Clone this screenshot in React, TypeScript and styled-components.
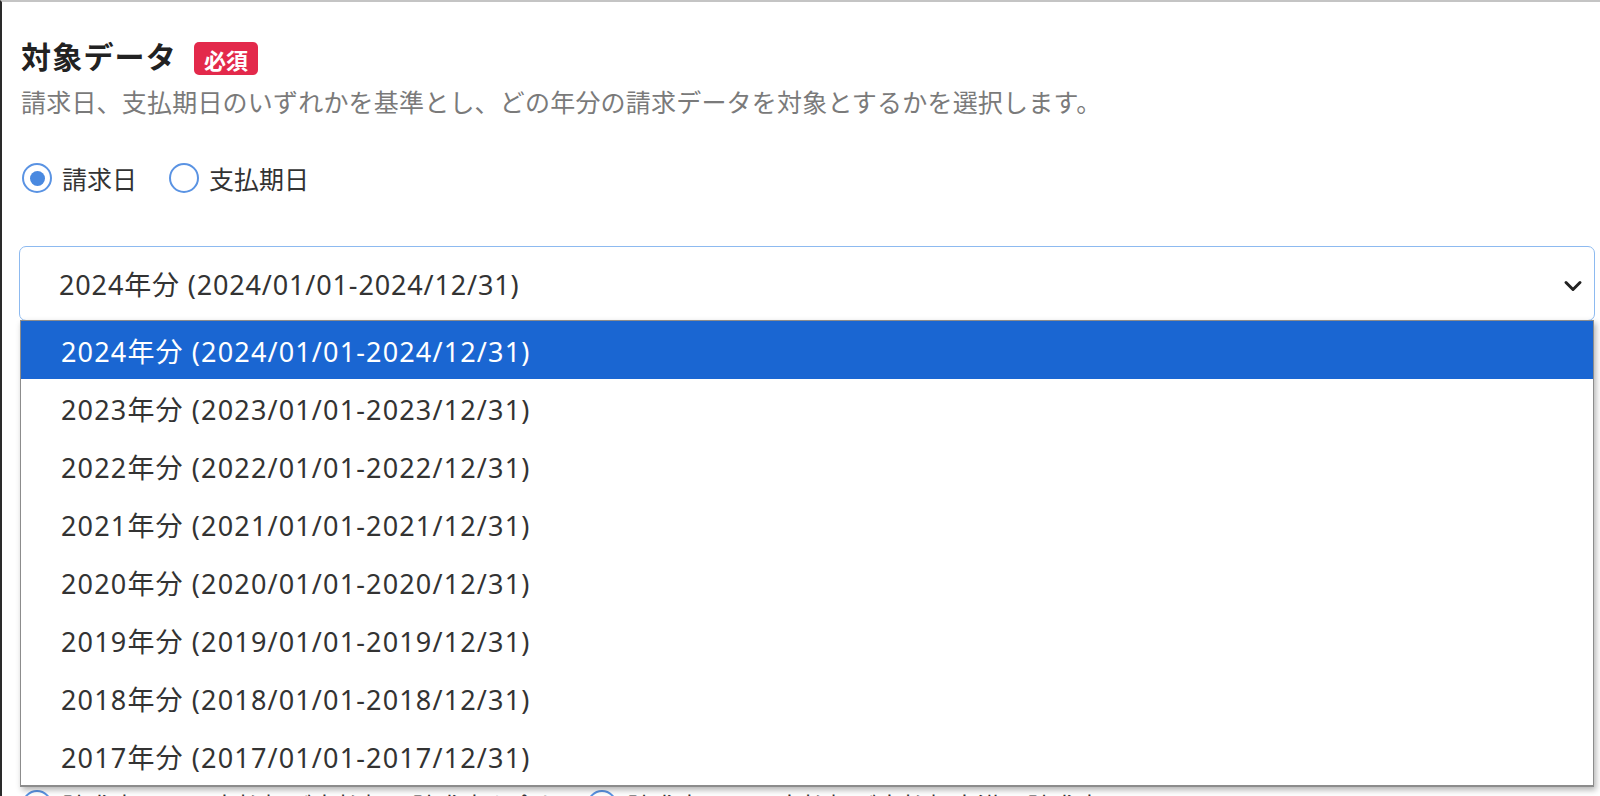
import React from "react";
import styled, { createGlobalStyle } from "styled-components";

const Global = createGlobalStyle`
  html, body { margin: 0; padding: 0; background: #fff; }
  body { font-family: "Noto Sans", "Noto Sans CJK JP", sans-serif; color: #333; overflow: hidden; }
`;

const Frame = styled.div`
  width: 1600px;
  height: 796px;
  box-sizing: border-box;
  border-left: 2px solid #2a2a2a;
  border-top: 2px solid #c4c4c4;
  padding: 31px 5px 0 17px;
  overflow: hidden;
`;

const TitleRow = styled.div`
  display: flex;
  align-items: center;
  gap: 17px;
  height: 44px;
  padding-left: 2px;
`;

const Title = styled.h2`
  margin: 0;
  font-size: 30px;
  line-height: 44px;
  font-weight: 700;
  color: #222;
  font-family: "Noto Sans CJK JP", sans-serif;
  letter-spacing: 1.2px;
`;

const Badge = styled.span`
  display: inline-flex;
  align-items: center;
  justify-content: center;
  width: 64px;
  height: 33px;
  margin-top: 7px;
  border-radius: 5px;
  background: #e3294b;
  color: #fff;
  font-size: 22px;
  font-weight: 700;
  font-family: "Noto Sans CJK JP", sans-serif;
`;

const Desc = styled.p`
  margin: 7px 0 0;
  padding-left: 2px;
  font-size: 25px;
  line-height: 34px;
  color: #7a7a7a;
  letter-spacing: 0.2px;
  font-family: "Noto Sans CJK JP", sans-serif;
`;

const RadioGroup = styled.div<{ $top: number; $gap: number }>`
  display: flex;
  align-items: center;
  gap: ${(p) => p.$gap}px;
  height: 30px;
  margin-top: ${(p) => p.$top}px;
`;

const RadioLabel = styled.label`
  display: flex;
  align-items: center;
  gap: 10px;
  font-size: 25px;
  color: #333;
  font-family: "Noto Sans CJK JP", sans-serif;
  white-space: nowrap;
`;

const RadioCircle = styled.span<{ $checked?: boolean }>`
  box-sizing: border-box;
  width: 30px;
  height: 30px;
  border-radius: 50%;
  border: 2.5px solid #5a93e3;
  background: #fff;
  display: inline-flex;
  align-items: center;
  justify-content: center;
  margin-left: 3px;
  &::after {
    content: "";
    width: 15px;
    height: 15px;
    border-radius: 50%;
    background: ${(p) => (p.$checked ? "#4a89e0" : "transparent")};
  }
`;

const SelectWrap = styled.div`
  position: relative;
  margin-top: 53px;
`;

const SelectBox = styled.div`
  box-sizing: border-box;
  height: 75px;
  border: 1.5px solid #8dbaf0;
  border-radius: 7px;
  background: #fff;
  display: flex;
  align-items: center;
  justify-content: space-between;
  padding: 0 11px 0 39px;
  font-size: 27px;
  letter-spacing: 0.85px;
  color: #333;
`;

const Chevron = styled.svg`
  width: 20px;
  height: 14px;
  margin-top: 4px;
`;

const Dropdown = styled.ul`
  position: absolute;
  left: 1px;
  top: 74px;
  width: 1574px;
  box-sizing: border-box;
  margin: 0;
  padding: 0;
  list-style: none;
  background: #fff;
  border: 1px solid #8c8c8c;
  border-bottom-width: 2px;
  box-shadow: 2px 3px 6px rgba(0, 0, 0, 0.3);
  z-index: 5;
`;

const Option = styled.li<{ $active?: boolean }>`
  height: 58px;
  display: flex;
  align-items: center;
  padding-left: 40px;
  font-size: 27px;
  letter-spacing: 1.15px;
  color: ${(p) => (p.$active ? "#fff" : "#333")};
  background: ${(p) => (p.$active ? "#1a66d2" : "#fff")};
`;

const years = [2024, 2023, 2022, 2021, 2020, 2019, 2018, 2017];
const label = (y: number) => `${y}年分 (${y}/01/01-${y}/12/31)`;

export default function App() {
  return (
    <>
      <Global />
      <Frame>
        <TitleRow>
          <Title>対象データ</Title>
          <Badge>必須</Badge>
        </TitleRow>
        <Desc>請求日、支払期日のいずれかを基準とし、どの年分の請求データを対象とするかを選択します。</Desc>
        <RadioGroup $top={45} $gap={29}>
          <RadioLabel>
            <RadioCircle $checked />
            請求日
          </RadioLabel>
          <RadioLabel>
            <RadioCircle />
            支払期日
          </RadioLabel>
        </RadioGroup>
        <SelectWrap>
          <SelectBox>
            <span>{label(2024)}</span>
            <Chevron viewBox="0 0 20 14">
              <path d="M3 3.5 L10 10.5 L17 3.5" fill="none" stroke="#222" strokeWidth="3" strokeLinecap="round" strokeLinejoin="round" />
            </Chevron>
          </SelectBox>
          <Dropdown>
            {years.map((y, i) => (
              <Option key={y} $active={i === 0}>
                {label(y)}
              </Option>
            ))}
          </Dropdown>
        </SelectWrap>
        <RadioGroup $top={469} $gap={22}>
          <RadioLabel>
            <RadioCircle $checked />
            請求書のうち未払額が支払額の請求書を含む
          </RadioLabel>
          <RadioLabel>
            <RadioCircle $checked />
            請求書のうち未払額が支払額未満の請求書
          </RadioLabel>
        </RadioGroup>
      </Frame>
    </>
  );
}
